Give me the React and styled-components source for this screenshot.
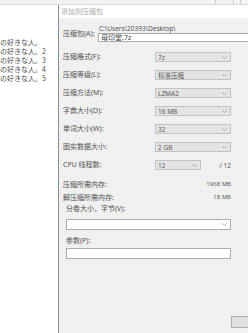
import React from 'react';
import styled, { createGlobalStyle } from 'styled-components';

const GlobalStyle = createGlobalStyle`
  html, body {
    margin: 0;
    padding: 0;
    background: #fff;
  }
  body {
    width: 248px;
    height: 333px;
    overflow: hidden;
    font-family: "Noto Sans", "Noto Sans CJK SC", sans-serif;
  }
`;

const Screen = styled.div`
  width: 248px;
  height: 333px;
  display: flex;
  flex-direction: column;
  overflow: hidden;
`;

const TopStrip = styled.div`
  height: 4px;
  flex-shrink: 0;
  background: #f3f3f3;
  border-bottom: 1px solid #dadada;
  display: flex;
  justify-content: flex-end;
`;

const StripCell = styled.div`
  width: ${(p) => p.$w}px;
  border-left: 1px solid #cfcfcf;
`;

const Main = styled.div`
  flex: 1;
  display: flex;
  min-height: 0;
`;

const LeftPane = styled.div`
  width: 58px;
  flex-shrink: 0;
  padding-top: 33px;
  box-sizing: border-box;
  overflow: hidden;
`;

const JpLine = styled.div`
  font-family: "Noto Sans CJK JP", sans-serif;
  font-size: 7px;
  line-height: 9px;
  color: #505050;
  white-space: nowrap;
`;

const Dialog = styled.div`
  width: 280px;
  flex-shrink: 0;
  border-left: 1px solid #8c8c8c;
  display: flex;
  flex-direction: column;
  background: #f0f0f0;
`;

const TitleBar = styled.div`
  height: 13px;
  flex-shrink: 0;
  background: #fff;
  padding-left: 2px;
  font-size: 7px;
  line-height: 13px;
  color: #ababab;
`;

const Body = styled.div`
  flex: 1;
  display: flex;
  flex-direction: column;
  padding-left: 4px;
  color: #505050;
  font-size: 7px;
`;

const ArchiveRow = styled.div`
  display: flex;
  margin-top: 7px;
`;

const ArchiveLabel = styled.div`
  width: 35px;
  flex-shrink: 0;
  margin-top: 5px;
  line-height: 8px;
  white-space: nowrap;
`;

const FieldCol = styled.div`
  flex: 1;
  display: flex;
  flex-direction: column;
`;

const PathText = styled.div`
  line-height: 8px;
  padding-left: 1px;
  font-size: 6.5px;
  white-space: nowrap;
`;

const TextBox = styled.div`
  height: ${(p) => p.$h || 9}px;
  box-sizing: border-box;
  background: #fff;
  border: 1px solid #ababab;
  padding-left: 2px;
  line-height: ${(p) => (p.$h || 9) - 2}px;
  font-size: 7px;
  color: #444;
  white-space: nowrap;
  display: flex;
  align-items: center;
  justify-content: space-between;
  padding-right: 3px;
`;

const Settings = styled.div`
  width: 168px;
  display: flex;
  flex-direction: column;
  margin-top: 10px;
`;

const OptionRow = styled.div`
  display: flex;
  align-items: center;
  height: 10px;
  margin-bottom: 8px;
  &:last-child {
    margin-bottom: 0;
  }
`;

const OptionLabel = styled.div`
  width: 92px;
  flex-shrink: 0;
  white-space: nowrap;
  line-height: 10px;
`;

const Select = styled.div`
  width: ${(p) => p.$w || 76}px;
  height: 10px;
  box-sizing: border-box;
  background: #e4e4e4;
  border: 1px solid #c2c2c2;
  display: flex;
  align-items: center;
  justify-content: space-between;
  padding: 0 3px 0 2px;
  font-size: 6.5px;
  color: #5a5a5a;
  white-space: nowrap;
`;

const TrailValue = styled.div`
  margin-left: auto;
  font-size: 6.5px;
  color: #5a5a5a;
`;

const MemRow = styled.div`
  display: flex;
  justify-content: space-between;
  align-items: center;
  height: 13px;
  line-height: 13px;
  &:first-of-type {
    margin-top: 9px;
  }
`;

const MemValue = styled.div`
  font-size: 6px;
  color: #5a5a5a;
`;

const FieldSection = styled.div`
  width: 165px;
  margin-left: 3px;
  display: flex;
  flex-direction: column;
`;

const FieldLabel = styled.div`
  line-height: 10px;
  margin-top: ${(p) => p.$mt}px;
  margin-bottom: ${(p) => p.$mb}px;
  white-space: nowrap;
`;

const Footer = styled.div`
  margin-top: auto;
  padding: 0 0 5px 168px;
  display: flex;
`;

const Button = styled.div`
  width: 58px;
  height: 12px;
  box-sizing: border-box;
  background: #e1e1e1;
  border: 1px solid #adadad;
`;

function Chevron() {
  return (
    <svg width="5" height="3" viewBox="0 0 5 3">
      <polyline points="0.3,0.3 2.5,2.5 4.7,0.3" fill="none" stroke="#9a9a9a" strokeWidth="0.8" />
    </svg>
  );
}

const jpLines = ['の好きな人。', 'の好きな人。2', 'の好きな人。3', 'の好きな人。4', 'の好きな人。5'];

const options = [
  { label: '压缩格式(F):', value: '7z' },
  { label: '压缩等级(L):', value: '标准压缩' },
  { label: '压缩方法(M):', value: 'LZMA2' },
  { label: '字典大小(D):', value: '16 MB' },
  { label: '单词大小(W):', value: '32' },
  { label: '固实数据大小:', value: '2 GB' },
];

export default function App() {
  return (
    <Screen>
      <GlobalStyle />
      <TopStrip>
        <StripCell $w={17} />
        <StripCell $w={6} />
        <StripCell $w={7} />
      </TopStrip>
      <Main>
        <LeftPane>
          {jpLines.map((line) => (
            <JpLine key={line}>{line}</JpLine>
          ))}
        </LeftPane>
        <Dialog>
          <TitleBar>添加到压缩包</TitleBar>
          <Body>
            <ArchiveRow>
              <ArchiveLabel>压缩包(A):</ArchiveLabel>
              <FieldCol>
                <PathText>C:\Users\20393\Desktop\</PathText>
                <TextBox>母印堂.7z</TextBox>
              </FieldCol>
            </ArchiveRow>

            <Settings>
              {options.map((o) => (
                <OptionRow key={o.label}>
                  <OptionLabel>{o.label}</OptionLabel>
                  <Select>
                    <span>{o.value}</span>
                    <Chevron />
                  </Select>
                </OptionRow>
              ))}
              <OptionRow>
                <OptionLabel>CPU 线程数:</OptionLabel>
                <Select $w={46}>
                  <span>12</span>
                  <Chevron />
                </Select>
                <TrailValue>/ 12</TrailValue>
              </OptionRow>
              <MemRow>
                <span>压缩所需内存:</span>
                <MemValue>1968 MB</MemValue>
              </MemRow>
              <MemRow>
                <span>解压缩所需内存:</span>
                <MemValue>18 MB</MemValue>
              </MemRow>
            </Settings>

            <FieldSection>
              <FieldLabel $mt={0} $mb={5}>分卷大小，字节(V):</FieldLabel>
              <TextBox $h={11}>
                <span />
                <Chevron />
              </TextBox>
              <FieldLabel $mt={6} $mb={2}>参数(P):</FieldLabel>
              <TextBox $h={11} />
            </FieldSection>

            <Footer>
              <Button />
            </Footer>
          </Body>
        </Dialog>
      </Main>
    </Screen>
  );
}
